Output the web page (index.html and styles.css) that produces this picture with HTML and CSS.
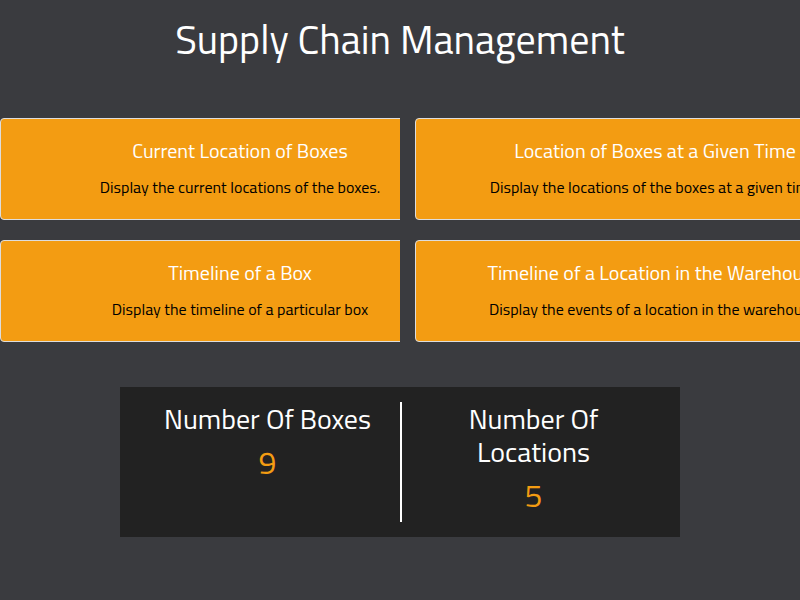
FILE: index.html
```html
<!DOCTYPE html>
<html lang="en">
<head>
<meta charset="utf-8">
<meta name="viewport" content="width=device-width, initial-scale=1">
<title>Supply Chain Management</title>
<link rel="stylesheet" href="styles.css">
</head>
<body>
<h1 class="page-title">Supply Chain Management</h1>
<main>
  <nav class="menu">
    <div class="menu-cell">
      <a class="card" href="#current">
        <h2 class="card-title">Current Location of Boxes</h2>
        <p class="card-text">Display the current locations of the boxes.</p>
      </a>
    </div>
    <div class="menu-cell">
      <a class="card" href="#given-time">
        <h2 class="card-title">Location of Boxes at a Given Time</h2>
        <p class="card-text">Display the locations of the boxes at a given time.</p>
      </a>
    </div>
    <div class="menu-cell">
      <a class="card" href="#box">
        <h2 class="card-title">Timeline of a Box</h2>
        <p class="card-text">Display the timeline of a particular box</p>
      </a>
    </div>
    <div class="menu-cell">
      <a class="card" href="#location">
        <h2 class="card-title">Timeline of a Location in the Warehouse</h2>
        <p class="card-text">Display the events of a location in the warehouse.</p>
      </a>
    </div>
  </nav>
  <section class="stats">
    <div class="stat">
      <h2 class="stat-title">Number Of Boxes</h2>
      <p class="stat-value">9</p>
    </div>
    <div class="stat">
      <h2 class="stat-title">Number Of Locations</h2>
      <p class="stat-value">5</p>
    </div>
  </section>
</main>
</body>
</html>
```
FILE: styles.css
```css
* {
  box-sizing: border-box;
}

body {
  margin: 0;
  overflow-x: hidden;
  background: #3a3b3f;
  color: #fff;
  font-family: "Titillium Web", Roboto, sans-serif;
}

h1,
h2,
p {
  margin: 0;
}

.page-title {
  padding: 18px 0 56px;
  font-size: 40px;
  font-weight: 400;
  line-height: 44px;
  text-align: center;
}

.menu {
  display: grid;
  grid-template-columns: 50% 50%;
  gap: 20px 15px;
}

.menu-cell {
  overflow: hidden;
}

.card {
  display: block;
  width: 120%;
  padding: 21px 20px;
  border: 1px solid #ddd;
  border-radius: 4px;
  background: #f39c12;
  color: #000;
  text-align: center;
  text-decoration: none;
  white-space: nowrap;
}

.card-title {
  margin-bottom: 14px;
  color: #fff;
  font-size: 20px;
  font-weight: 400;
  line-height: 22px;
}

.card-text {
  font-size: 16px;
  font-weight: 400;
  line-height: 22px;
}

.stats {
  display: grid;
  grid-template-columns: 1fr 1fr;
  width: 70%;
  margin: 45px auto 0;
  padding: 15px;
  background: #222;
  text-align: center;
}

.stat {
  min-height: 120px;
  padding: 0 20px;
}

.stat + .stat {
  border-left: 2px solid #fff;
}

.stat-title {
  font-size: 28px;
  font-weight: 400;
  line-height: 33px;
}

.stat-value {
  margin-top: 10px;
  color: #f39c12;
  font-size: 32px;
  font-weight: 400;
  line-height: 34px;
}
```
